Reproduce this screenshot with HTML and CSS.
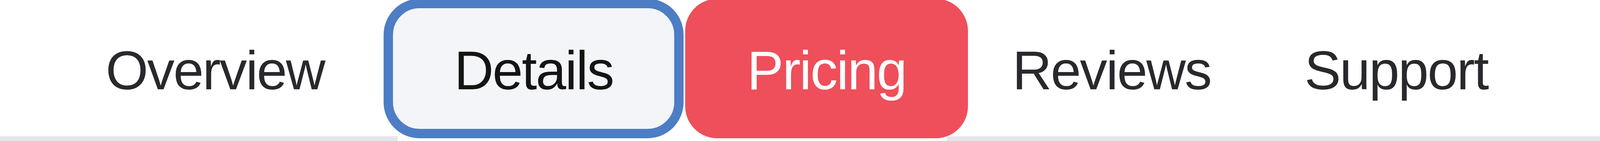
FILE: index.html
```html
<!DOCTYPE html>
<html lang="en">
<head>
    <meta charset="UTF-8">
    <meta name="viewport" content="width=device-width, initial-scale=1.0">
    <title>Product Tabs</title>
    <link rel="stylesheet" href="styles.css">
</head>
<body>
    <!-- Tab bar -->
    <nav class="tabs">
        <ul class="tab-list">
            <li class="tab tab--overview"><a href="#overview" class="tab-link">Overview</a></li>
            <li class="tab tab--focus"><a href="#details" class="tab-link">Details</a></li>
            <li class="tab tab--active"><a href="#pricing" class="tab-link">Pricing</a></li>
            <li class="tab tab--reviews"><a href="#reviews" class="tab-link">Reviews</a></li>
            <li class="tab tab--support"><a href="#support" class="tab-link">Support</a></li>
        </ul>
    </nav>
</body>
</html>
```

FILE: styles.css
```css
body {
    margin: 0;
    background-color: #fff;
    font-family: "Liberation Sans", Arial, sans-serif;
}
.tab-list {
    display: flex;
    list-style: none;
    margin: 0;
    padding: 0 0 0 3.78vw;
    height: 348px;
    border-bottom: 12px solid #e6e6ea;
}
.tab {
    position: relative;
    display: flex;
}
.tab-link {
    position: relative;
    z-index: 1;
    display: flex;
    align-items: center;
    justify-content: center;
    box-sizing: border-box;
    width: 100%;
    height: 356px;
    margin-top: -3px;
    padding-top: 10px;
    font-size: 140px;
    line-height: 1;
    letter-spacing: -3px;
    color: #28292d;
    text-decoration: none;
    white-space: nowrap;
}
.tab--overview { flex: 0 0 19.32vw; }
.tab--reviews { flex: 0 0 17.97vw; }
.tab--support { flex: 0 0 17.6vw; }

/* focused tab */
.tab--focus {
    flex: 0 0 18.75vw;
    margin-left: 0.88vw;
}
.tab--focus .tab-link {
    border: 24px solid #4d7dc4;
    border-radius: 92px;
    background-color: #f4f5f8;
    color: #141414;
}
.tab--focus::after {
    content: "";
    position: absolute;
    left: 0.88vw;
    right: -0.1vw;
    bottom: -12px;
    height: 12px;
    background-color: #fff;
}

/* selected tab */
.tab--active {
    flex: 0 0 17.66vw;
    margin-left: 0.1vw;
}
.tab--active .tab-link {
    border-radius: 82px;
    background-color: #ef4f5a;
    color: #fff;
}
.tab--active::after {
    content: "";
    position: absolute;
    left: 0;
    right: 1.34vw;
    bottom: -12px;
    height: 12px;
    background-color: #fff;
}
```
